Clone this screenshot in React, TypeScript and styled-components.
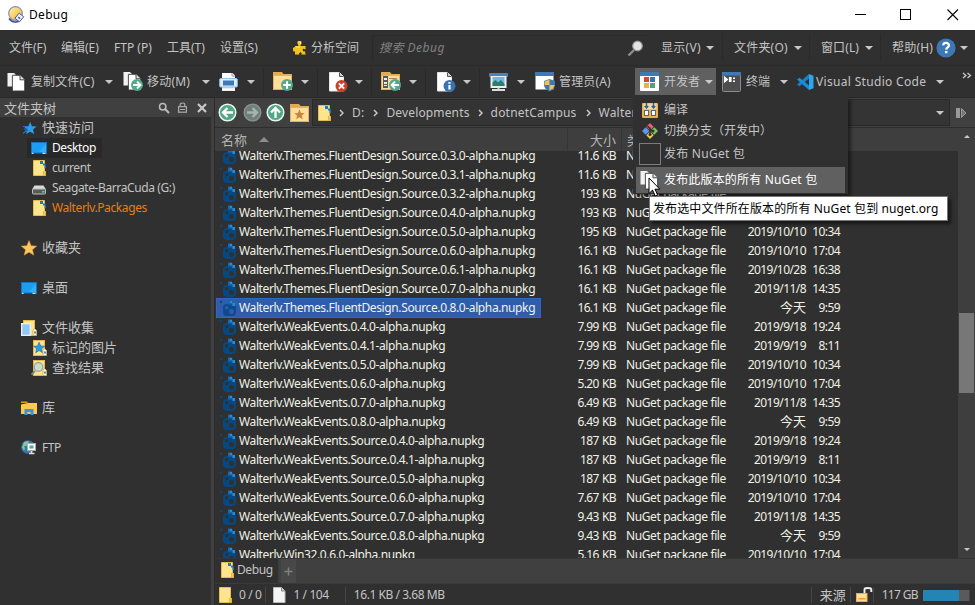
import React from 'react';
import styled, { createGlobalStyle, css } from 'styled-components';

const Global = createGlobalStyle`
  * { box-sizing: border-box; }
  body { margin: 0; background: #303030; overflow: hidden; }
`;

const Window = styled.div`
  position: relative;
  width: 975px;
  height: 605px;
  display: flex;
  flex-direction: column;
  overflow: hidden;
  background: #303030;
  color: #c4c4c4;
  font: 12px/20px 'Noto Sans', 'Noto Sans CJK SC', sans-serif;
  white-space: pre;
  cursor: default;
`;

const Label = styled.span<{ $ls?: number; $size?: number; $color?: string }>`
  flex: none;
  letter-spacing: ${p => p.$ls ?? 0}px;
  font-size: ${p => p.$size ?? 12}px;
  ${p => p.$color && css`color: ${p.$color};`}
`;

const Gap = styled.span<{ $w: number }>`
  flex: none;
  width: ${p => p.$w}px;
`;

const Arrow = styled.span`
  flex: none;
  width: 0;
  height: 0;
  border: 4px solid transparent;
  border-top-color: #c8c8c8;
  border-bottom-width: 0;
`;

const Grow = styled.span`
  flex: 1;
`;

const Divider = styled.span<{ $h?: number; $color?: string }>`
  flex: none;
  width: 1px;
  height: ${p => p.$h ?? 27}px;
  background: ${p => p.$color ?? '#2a2a2a'};
`;

/* ---------- title bar ---------- */
const TitleBar = styled.header`
  flex: none;
  height: 30px;
  display: flex;
  align-items: center;
  padding-left: 7px;
  background: #fff;
  color: #000;
`;

/* ---------- menu bar ---------- */
const MenuBar = styled.nav`
  flex: none;
  height: 36px;
  display: flex;
  align-items: center;
  padding-left: 9px;
  border-bottom: 1px solid #2a2a2a;
`;

const MenuItem = styled.div<{ $w: number }>`
  flex: none;
  width: ${p => p.$w}px;
  display: flex;
  align-items: center;
`;

const SearchBox = styled.div`
  flex: none;
  width: 275px;
  height: 25px;
  margin-right: 14px;
  display: flex;
  align-items: center;
  padding-left: 6px;
  border: solid #292929;
  border-width: 1px 0 0 1px;
  color: #818181;
  font-style: italic;
`;

/* ---------- toolbar ---------- */
const Toolbar = styled.div`
  flex: none;
  height: 32px;
  display: flex;
  align-items: center;
  padding-left: 7px;
  border-bottom: 1px solid #292929;
`;

const ToolButton = styled.button<{ $w: number; $open?: boolean }>`
  flex: none;
  width: ${p => p.$w}px;
  height: 27px;
  display: flex;
  align-items: center;
  padding: 0 0 0 ${p => (p.$open ? 5 : 0)}px;
  border: 0;
  background: ${p => (p.$open ? '#606060' : 'transparent')};
  color: inherit;
  font: inherit;
  text-align: left;
`;

const Tail = styled.span<{ $w: number; $line?: boolean }>`
  flex: none;
  width: ${p => p.$w}px;
  height: 27px;
  padding-left: 8px;
  ${p => p.$line && css`
    &::before { content: ''; display: block; width: 1px; height: 100%; background: #292929; }
  `}
`;

/* ---------- body ---------- */
const Body = styled.main`
  flex: 1;
  min-height: 0;
  display: flex;
`;

const Sidebar = styled.aside`
  flex: none;
  width: 211px;
`;

const PaneHeader = styled.div`
  height: 19px;
  margin-bottom: 1px;
  display: flex;
  align-items: center;
  padding-left: 4px;
  background: #404040;
`;

const Splitter = styled.div`
  flex: none;
  width: 4px;
  background: #404040;
  border-right: 1px solid #2c2c2c;
`;

const TreeRow = styled.div<{ $child?: boolean }>`
  height: 20px;
  display: flex;
  align-items: center;
  padding-left: ${p => (p.$child ? 27 : 21)}px;
`;

const TreeNode = styled.div<{ $child?: boolean; $selected?: boolean }>`
  height: 20px;
  display: flex;
  align-items: center;
  gap: 5px;
  padding: 0 6px 0 ${p => (p.$child ? 4 : 0)}px;
  background: ${p => (p.$selected ? '#282828' : 'transparent')};
  color: ${p => (p.$selected ? '#fff' : 'inherit')};
`;

const TreeLabel = styled.span<{ $cjk: boolean; $color?: string }>`
  font-size: ${p => (p.$cjk ? 13 : 12)}px;
  letter-spacing: ${p => (p.$cjk ? 0 : -0.39)}px;
  padding-bottom: ${p => (p.$cjk ? 2 : 0)}px;
  ${p => p.$color && css`color: ${p.$color};`}
`;

const Lister = styled.section`
  flex: 1;
  min-width: 0;
  display: flex;
  flex-direction: column;
`;

const AddressBar = styled.div`
  flex: none;
  height: 30px;
  display: flex;
  align-items: center;
  padding: 1px 0 1px 3px;
  background: #404040;
  border-bottom: 1px solid #2e2e2e;
`;

const PathBox = styled.div`
  flex: none;
  width: 638px;
  height: 27px;
  margin-left: 3px;
  display: flex;
  align-items: center;
  padding-left: 3px;
  background: #343434;
  border: 1px solid #2a2a2a;
`;

const Columns = styled.div`
  flex: none;
  height: 23px;
  display: flex;
  align-items: center;
  background: #3e3e3e;
  color: #b4b4b4;
`;

const SortMark = styled.span`
  width: 0;
  height: 0;
  margin-left: 12px;
  border: 5px solid transparent;
  border-top-width: 0;
  border-bottom-color: #8c8c8c;
`;

const ListArea = styled.div`
  flex: 1;
  min-height: 0;
  display: flex;
`;

const FileList = styled.div`
  flex: 1;
  overflow: hidden;
`;

const FileRows = styled.div`
  margin-top: -5px;
  color: #f0f2e6;
`;

const FileRow = styled.div`
  height: 19px;
  display: flex;
  align-items: center;
`;

const FileName = styled.div<{ $selected?: boolean }>`
  height: 20px;
  display: flex;
  align-items: center;
  gap: 2px;
  padding: 0 5px 0 3px;
  margin-left: 1px;
  border: 1px solid ${p => (p.$selected ? '#2f68c4' : 'transparent')};
  background: ${p => (p.$selected ? '#2f5cab' : 'transparent')};
`;

const NameCell = styled.div`
  flex: none;
  width: 341px;
  display: flex;
`;

const Cell = styled.div<{ $w: number; $right?: boolean; $ls: number; $ws?: number }>`
  flex: none;
  width: ${p => p.$w}px;
  letter-spacing: ${p => p.$ls}px;
  word-spacing: ${p => p.$ws ?? 0}px;
  text-align: ${p => (p.$right ? 'right' : 'left')};
`;

const Scrollbar = styled.div`
  flex: none;
  width: 17px;
  margin-top: -23px;
  display: flex;
  flex-direction: column;
  align-items: center;
  background: #3e3e3e;
  padding: 7px 0;
`;

const Thumb = styled.div`
  width: 15px;
  height: 80px;
  margin: 175px 0 auto;
  background: #777;
`;

const ScrollArrow = styled.span<{ $up?: boolean }>`
  width: 0;
  height: 0;
  border: 3px solid transparent;
  ${p => (p.$up
    ? css`border-top-width: 0; border-bottom-color: #c8c8c8;`
    : css`border-bottom-width: 0; border-top-color: #c8c8c8;`)}
`;

const Tabs = styled.div`
  flex: none;
  height: 26px;
  display: flex;
  background: #404040;
  border-top: 1px solid #353535;
  border-bottom: 1px solid #3a3a3a;
`;

const Tab = styled.div`
  width: 64px;
  display: flex;
  align-items: center;
  gap: 2px;
  padding: 0 0 2px 4px;
  background: #303030;
  border-right: 1px solid #3d3d3d;
`;

const AddTab = styled.div`
  width: 15px;
  margin-left: 2px;
  display: flex;
  align-items: center;
  justify-content: center;
  background: #484848;
`;

const StatusBar = styled.footer`
  flex: none;
  height: 21px;
  display: flex;
  align-items: center;
  padding: 1px 0 0 2px;
`;

const DiskBar = styled.div`
  width: 47px;
  height: 11px;
  margin: 0 5px 0 5px;
  background: #5a5a5a;
  border-right: 1px solid #444;
  &::before { content: ''; display: block; width: 36px; height: 11px; background: #2484b4; }
`;

/* ---------- floating layers ---------- */
const Popup = styled.div`
  position: absolute;
  left: 633px;
  top: 97px;
  width: 215px;
  height: 97px;
  padding: 2px 3px 0;
  background: #303030;
  box-shadow: 3px 3px 3px rgba(0, 0, 0, 0.45);
`;

const PopupItem = styled.div<{ $h: number; $active?: boolean; $up?: boolean }>`
  height: ${p => p.$h}px;
  display: flex;
  align-items: center;
  padding: 0 0 ${p => (p.$up ? 2 : 0)}px 3px;
  background: ${p => (p.$active ? '#606060' : 'transparent')};
  color: ${p => (p.$active ? '#fff' : '#c4c4c4')};
`;

const PopupIcon = styled.span`
  flex: none;
  width: 25px;
  display: flex;
  align-items: center;
`;

const EmptyIcon = styled.span`
  width: 22px;
  height: 22px;
  border: 1px solid #7c7c7c;
`;

const Tooltip = styled.div`
  position: absolute;
  left: 649px;
  top: 196px;
  width: 299px;
  height: 25px;
  padding-left: 3px;
  line-height: 24px;
  background: #fff;
  border: 1px solid #767676;
  color: #000;
  box-shadow: 3px 3px 3px rgba(0, 0, 0, 0.5);
`;

const Pointer = styled.svg`
  position: absolute;
  left: 648px;
  top: 177px;
`;

/* ---------- icons ---------- */
type IconProps = { w?: number; h?: number; vb?: string; children: React.ReactNode };
const IconSvg = styled.svg`
  flex: none;
  display: block;
`;
const Icon = ({ w = 20, h = 20, vb, children }: IconProps) => (
  <IconSvg width={w} height={h} viewBox={vb ?? `0 0 ${w} ${h}`}>{children}</IconSvg>
);

const AppIcon = () => (
  <Icon w={18} h={18}>
    <defs><linearGradient id="gold" x1="0" y1="0" x2="1" y2="1"><stop offset="0" stopColor="#fff3b0" /><stop offset="1" stopColor="#f0b224" /></linearGradient></defs>
    <circle cx="8.5" cy="7.5" r="6.8" fill="url(#gold)" stroke="#8b8fb8" strokeWidth="1.2" />
    <path d="M2 12.5C5 17 11 17 13 14" stroke="#4854a0" strokeWidth="1.6" fill="none" />
    <path d="M12.2 7.2l4.5 3.6-4.2 5-4.6-3.6z" fill="#eef1fb" stroke="#4a5698" />
    <path d="M11.7 10.5l2 1.6-1 1.2-2-1.6z" fill="#5966a5" />
  </Icon>
);
const Puzzle = () => (
  <Icon w={14} h={16}>
    <path d="M4.500 4V1.500L5.500 1h2l1 .5V4l-1 1V6H12.500v3.300h-1.300L10.500 8.500 9.500 10l1 1.500h1.800V15H8.500l.3-1.600L7.500 12 6 13.400l.2 1.600H2v-4L1 12 0 10.500 0 8l2-1.300V6h3.300V5z" fill="#f2c31d" />
    <path d="M5.500 2h2v2M3 7h4" stroke="#ffe98a" fill="none" /><path d="M2 14.500h4M9 14.500h3.500" stroke="#a87a08" />
  </Icon>
);
const SearchGlass = () => (
  <Icon w={17} h={17}><path d="M7 10L1.500 15.500" stroke="#8d8d8d" strokeWidth="2.400" /><circle cx="10.500" cy="6" r="4.800" fill="#e4e4e4" stroke="#969696" strokeWidth="1.200" /></Icon>
);
const Help = () => (
  <Icon w={20} h={20}>
    <circle cx="10" cy="10" r="9.600" fill="#3b78b5" />
    <path d="M7.200 7.400c.2-3.400 6-3.200 5.700.2-.2 2-2.500 1.800-2.700 4" stroke="#fff" strokeWidth="2.200" fill="none" /><rect x="9" y="13" width="2.400" height="2.200" fill="#fff" />
  </Icon>
);
const Copies = () => (
  <Icon w={19} h={20}>
    <path d="M.5 1h6.500l1.500 1.500V14.500H.5z" fill="#f2f2f2" />
    <path d="M5.400 3.300h8l4.300 4.300V19H5.400z" fill="#fff" stroke="#3a3a3a" strokeWidth=".9" />
    <path d="M13 3.300v4.500h4.700" fill="#e4e4e4" stroke="#333" strokeWidth=".9" />
  </Icon>
);
const Badge = ({ color, children }: { color: string; children: React.ReactNode }) => (
  <g><circle cx="14" cy="14" r="6" fill={color} />{children}</g>
);
const Move = () => (
  <Icon w={21} h={21}>
    <path d="M.5 1h6.500l1.500 1.500V14.500H.5z" fill="#f2f2f2" /><path d="M5.400 3.300h8l4.300 4.300V19H5.400z" fill="#fff" stroke="#3a3a3a" strokeWidth=".9" /><path d="M13 3.300v4.500h4.700" fill="#e4e4e4" stroke="#333" strokeWidth=".9" />
    <Badge color="#55a889"><path d="M10 14h7M14 10.600l3.500 3.400-3.500 3.400" stroke="#fff" strokeWidth="2" fill="none" /></Badge>
  </Icon>
);
const Printer = () => (
  <Icon w={19} h={20}>
    <path d="M3 1h10.500L16 3.500V8H3z" fill="#fff" /><path d="M13 1v3h3" fill="none" stroke="#999" />
    <rect x="3" y="14" width="13" height="5" fill="#d8d8d8" /><path d="M3 17.500h13" stroke="#fff" strokeWidth="2" />
    <rect x=".7" y="6.500" width="17.600" height="8.500" rx="1" fill="#dcecfa" stroke="#8fc0ec" />
    <rect x="4" y="8.500" width="11" height="5" fill="#3e79b7" />
  </Icon>
);
const FolderShape = () => (
  <g><path d="M0 4V1h9l1.500 2H19v15H0z" fill="#e4aa55" /><path d="M0 5h19v14H0z" fill="#ffdf9a" /><path d="M.5 4.500h18v14H.5z" fill="none" stroke="#e6b261" /></g>
);
const NewFolder = () => (
  <Icon w={21} h={21}><FolderShape /><Badge color="#55a889"><path d="M14 10.200v7.600M10.200 14h7.600" stroke="#fff" strokeWidth="2" /></Badge></Icon>
);
const PageShape = () => (
  <g><path d="M.5.5h10l4 4v14.500H.5z" fill="#fff" stroke="#e6e6e6" /><path d="M10.500.5v4h4" fill="#ccc" stroke="#555" /></g>
);
const DeleteFile = () => (
  <Icon w={20} h={20}><PageShape /><g transform="translate(-1.500 0)"><Badge color="#c9412d"><path d="M11.400 11.400l5.200 5.200M16.600 11.400l-5.200 5.200" stroke="#fff" strokeWidth="2" /></Badge></g></Icon>
);
const GoFolder = () => (
  <Icon w={21} h={21}><FolderShape /><rect x="2" y="5" width="5" height="12" fill="#595959" /><path d="M3 7h3v2H3zM3 11h3v2H3zM3 14h3v1H3z" fill="#eee" /><path d="M8 7.500h8" stroke="#a58a60" />
    <Badge color="#55a889"><path d="M18 14h-7M14 10.600L10.600 14l3.400 3.400" stroke="#fff" strokeWidth="2" fill="none" /></Badge></Icon>
);
const FileInfo = () => (
  <Icon w={20} h={20}><PageShape /><g transform="translate(-1.500 0)"><Badge color="#3974b0"><path d="M14 13v4.500M14 10v1.800" stroke="#fff" strokeWidth="2.200" /></Badge></g></Icon>
);
const Slides = () => (
  <Icon w={20} h={20}><rect x="0" y="1" width="19" height="4" rx="1" fill="#4a82bd" /><rect x="1.500" y="4" width="16" height="12" fill="#eee" /><rect x="3.500" y="5" width="12" height="9" fill="#6eb9ea" /><path d="M3.500 14V10.500L6.500 8l2.500 2.500L12 8l3.500 4V14z" fill="#2e7d66" /><rect x="8.500" y="15.500" width="2" height="2" fill="#ccc" /><rect x="3" y="17" width="13" height="2" fill="#ddd" /></Icon>
);
const Admin = () => (
  <Icon w={21} h={21}><path d="M.5 1h18v17.500H.5z" fill="#fff" /><path d="M0 1h19v4H0z" fill="#3f7ab8" />
    <path d="M14.500 8l5.500 2v4c0 3-2.500 5-5.500 6.500C11.500 19 9 17 9 14v-4z" fill="#3a78b8" /><path d="M14.500 8.500v5.500H9.500v-3.500zM14.500 14h5c-.3 2.800-2.500 4.500-5 5.500z" fill="#f6bd54" /></Icon>
);
const DevWindow = () => (
  <Icon w={19} h={19}><rect width="19" height="19" rx="1" fill="#fff" /><path d="M0 0h19v4H0z" fill="#3f7ab8" /><rect x="4" y="5" width="5" height="5" fill="#cc4d33" /><rect x="10" y="5" width="5" height="5" fill="#3974b0" /><rect x="4" y="11" width="5" height="5" fill="#e8b04e" /><rect x="10" y="11" width="5" height="5" fill="#52a37c" /></Icon>
);
const Terminal = () => (
  <Icon w={19} h={20}><rect x=".5" y=".5" width="18" height="19" rx="1" fill="#4d4d4d" stroke="#8b8b8b" /><path d="M0 0h19v3.500H0z" fill="#3f7ab8" /><path d="M2.500 5v5l3-2.500zM9.500 5.700H7.500v3.600h2" stroke="#fff" fill="#fff" strokeWidth="1.200" /><path d="M11 5.500h2v1.500h-2zM11 8.500h2V10h-2z" fill="#fff" /></Icon>
);
const VsCode = () => (
  <Icon w={17} h={16}><path d="M12 0l4.500 1.800v12.400L12 16z" fill="#2ea6ee" /><path d="M12 0v4.500L2.500 12.300 0 10.600z" fill="#1b80c4" /><path d="M12 16v-4.500L2.500 3.700 0 5.400z" fill="#168fd8" /></Icon>
);
const MiniSearch = () => (
  <Icon w={12} h={12}><circle cx="4.700" cy="4.700" r="3.200" fill="none" stroke="#bbb" strokeWidth="1.500" /><path d="M7 7l4 4" stroke="#bbb" strokeWidth="2.200" /></Icon>
);
const Padlock = () => (
  <Icon w={9} h={11}><rect x=".6" y="4.600" width="7.800" height="5.600" fill="none" stroke="#aaa" strokeWidth="1.200" /><path d="M2.200 4.500V2.500C2.200.5 6.800.5 6.800 2.500v2M2 7.500h5" fill="none" stroke="#aaa" strokeWidth="1.200" /></Icon>
);
const Cross = () => (
  <Icon w={10} h={10}><path d="M1 1l8 8M9 1L1 9" stroke="#c8c8c8" strokeWidth="2.200" /></Icon>
);
const StarShape = 'M8 .5l2.200 5.200 5.600.4-4.300 3.600 1.400 5.500L8 12.200l-4.900 3 1.400-5.500L.2 6.100l5.600-.4z';
const QuickStar = () => (
  <Icon w={16} h={16}><path transform="translate(2.500 1.500) scale(.83)" d={StarShape} fill="#2b9cf0" /><path d="M2 6.500h5M3 9h4M2 13.500l4-3.500M4 12l3-2" stroke="#1c75c0" strokeWidth="1.200" /></Icon>
);
const GoldStar = () => (
  <Icon w={16} h={16}><path d={StarShape} fill="#ffc65c" stroke="#d88a34" strokeWidth=".5" /></Icon>
);
const Monitor = () => (
  <Icon w={16} h={16}><rect x=".5" y="2.500" width="15" height="11" fill="#1a9df5" stroke="#1673b8" /><path d="M8 12l7-8v8z" fill="#35aefc" /><path d="M1 13.300h14" stroke="#0e4d80" /><path d="M1 13.300h1.500M11.500 13.300h3" stroke="#fff" /></Icon>
);
const FolderPin = ({ pin = true }: { pin?: boolean }) => (
  <Icon w={16} h={16}><path d="M2.500 .5h11v11h1v4h-12z" fill="#ffe48e" stroke="#eac254" strokeWidth=".9" /><path d="M12.500 11v4.500h2v-4.500" fill="#f6ca52" stroke="#dfac38" strokeWidth=".7" />
    {pin && <path d="M9 1h3v3H9zM12 3.500h2.500v2H12zM13.500 5.500H15V8h-1.500z" fill="#2277c0" />}</Icon>
);
const Drive = () => (
  <Icon w={16} h={16}><path d="M3.500 5.500h9l2.500 4H1z" fill="#d9d9d9" /><rect x="1.500" y="9" width="13" height="5" rx="1" fill="#5a5a5a" stroke="#bdbdbd" /><rect x="11" y="11" width="2.500" height="1.500" fill="#2ee562" /></Icon>
);
const CollectBase = ({ children }: { children: React.ReactNode }) => (
  <Icon w={16} h={16}><rect x="2.500" y=".5" width="11" height="15" fill="#ffe48e" stroke="#e6b84a" />{children}<path d="M12 15.500v-5l1.500-2 2 2v5z" fill="#fff" stroke="#e0a93a" /><rect x="13" y="11.500" width="2" height="2" fill="#3f8fd8" /></Icon>
);
const Collection = () => <CollectBase><rect x=".7" y="3.700" width="8.600" height="11.600" fill="#8fc8f5" stroke="#e8eef5" strokeWidth="1.400" /></CollectBase>;
const Marked = () => <CollectBase><path transform="translate(2.500 2) scale(.7)" d={StarShape} fill="#2e9be8" stroke="#1d6fb2" /></CollectBase>;
const Found = () => <CollectBase><path d="M4 11l-3.500 3.500" stroke="#7a8a94" strokeWidth="1.800" /><circle cx="7.500" cy="7" r="4.300" fill="#cfdccb" stroke="#8fa3a8" strokeWidth="1.200" /></CollectBase>;
const Library = () => (
  <Icon w={16} h={16}><path d="M0 4V1.500h6l1 1.500H0z" fill="#e29a12" /><path d="M0 4.500l7-1.500h9v11H0z" fill="#fcc94a" /><path d="M3.500 15V9h9v6h-3v-3h-3v3z" fill="#3794de" /></Icon>
);
const Globe = () => (
  <Icon w={16} h={16}><circle cx="7" cy="7" r="6.800" fill="#3677ad" /><path d="M3 2l4-1 1 2-3 3-2 .5 1 2-1 2-2-3z" fill="#85c59a" /><rect x="6.500" y="3.500" width="8" height="7" fill="#fff" stroke="#aaa" /><rect x="8.500" y="5.500" width="4" height="3" fill="#55a889" /><path d="M10.500 11v2M8 13.500h5.500" stroke="#ddd" strokeWidth="1.500" /></Icon>
);
const Nav = ({ d, dim }: { d: string; dim?: boolean }) => (
  <Icon w={19} h={19}><circle cx="9.500" cy="9.500" r="8.300" fill={dim ? '#6b8177' : '#52a884'} stroke={dim ? '#8a8f8c' : '#e8f4ee'} strokeWidth="1.500" /><path d={d} stroke={dim ? '#aab3ae' : '#fff'} strokeWidth="2.300" fill="none" /></Icon>
);
const Favorite = () => (
  <Icon w={19} h={19}><FolderShape /><path transform="translate(4 6) scale(.68)" d={StarShape} fill="#c6843c" /></Icon>
);
const Chevron = () => (
  <Icon w={5} h={8}><path d="M1 1l3 3-3 3" stroke="#c8c8c8" strokeWidth="1.500" fill="none" /></Icon>
);
const Nupkg = ({ dim }: { dim?: boolean }) => {
  const hole = dim ? '#2f5cab' : '#303030';
  const body = dim ? '#0e4a8e' : '#044983';
  return (
    <Icon w={17} h={17}><rect x="3" y="5" width="13" height="12" rx="4" fill={body} /><circle cx="6.700" cy="8.700" r="1.700" fill={hole} /><circle cx="11.500" cy="12.500" r="2.500" fill={hole} /><path d="M8 1.500h4l1 4H8z" fill="#1769af" /><path d="M10 2h2v2h-2zM12.500 4h2.500v3h-2.500z" fill="#2c8bd6" /><rect x="0" y="2" width="2" height="2" fill="#044983" /></Icon>
  );
};
const Build = () => (
  <Icon w={16} h={16}><rect y="1" width="16" height="15" rx="1" fill="#eeb14a" /><rect x="1.500" y="1.500" width="13" height="6" fill="#f6d596" /><path d="M4.500 1v5M2.800 4l1.700 2L6.200 4M11.500 1v5M9.800 4l1.700 2 1.700-2" stroke="#1f62ad" strokeWidth="1.400" fill="none" /><rect x="2.500" y="8.500" width="4" height="5" fill="#fff" stroke="#56677a" /><rect x="9.500" y="8.500" width="4" height="5" fill="#fff" stroke="#56677a" /></Icon>
);
const Branch = () => (
  <Icon w={16} h={16}><path d="M8 0l3.700 3.700L8 7.400 4.300 3.700z" fill="#e8636c" /><path d="M12.300 4.300L16 8l-3.700 3.700L8.600 8z" fill="#7cc75b" /><path d="M3.700 4.300L7.400 8l-3.700 3.700L0 8z" fill="#5b97ec" /><path d="M8 8.600l3.700 3.700L8 16l-3.700-3.700z" fill="#e9c750" /><path d="M5.500 3l5 5.500M8 4.500V12" stroke="#333" strokeWidth="1.500" /><circle cx="8" cy="11.500" r="1.500" fill="#333" /><circle cx="11" cy="8" r="1.500" fill="#333" /></Icon>
);
const Unlock = () => (
  <Icon w={17} h={16}><rect x=".5" y="6.500" width="10.500" height="8" fill="#ffdf9a" stroke="#e5b057" /><rect x="2.500" y="11" width="7" height="1.500" fill="#dba14a" /><path d="M8.500 6V2.500C8.500 1 10 1 12 1s3.300 0 3.300 1.500V5" stroke="#f0f0f0" strokeWidth="1.900" fill="none" /></Icon>
);

/* ---------- data ---------- */
const fluent = 'Walterlv.Themes.FluentDesign.Source.';
const weak = 'Walterlv.WeakEvents.';
const files: [string, string, string, string][] = [
  [fluent + '0.3.0', '11.6 KB', '', ''],
  [fluent + '0.3.1', '11.6 KB', '', ''],
  [fluent + '0.3.2', '193 KB', '', ''],
  [fluent + '0.4.0', '193 KB', '', ''],
  [fluent + '0.5.0', '195 KB', '2019/10/10', '10:34'],
  [fluent + '0.6.0', '16.1 KB', '2019/10/10', '17:04'],
  [fluent + '0.6.1', '16.1 KB', '2019/10/28', '16:38'],
  [fluent + '0.7.0', '16.1 KB', '2019/11/8', '14:35'],
  [fluent + '0.8.0', '16.1 KB', '今天', '9:59'],
  [weak + '0.4.0', '7.99 KB', '2019/9/18', '19:24'],
  [weak + '0.4.1', '7.99 KB', '2019/9/19', '8:11'],
  [weak + '0.5.0', '7.99 KB', '2019/10/10', '10:34'],
  [weak + '0.6.0', '5.20 KB', '2019/10/10', '17:04'],
  [weak + '0.7.0', '6.49 KB', '2019/11/8', '14:35'],
  [weak + '0.8.0', '6.49 KB', '今天', '9:59'],
  [weak + 'Source.0.4.0', '187 KB', '2019/9/18', '19:24'],
  [weak + 'Source.0.4.1', '187 KB', '2019/9/19', '8:11'],
  [weak + 'Source.0.5.0', '187 KB', '2019/10/10', '10:34'],
  [weak + 'Source.0.6.0', '7.67 KB', '2019/10/10', '17:04'],
  [weak + 'Source.0.7.0', '9.43 KB', '2019/11/8', '14:35'],
  [weak + 'Source.0.8.0', '9.43 KB', '今天', '9:59'],
  ['Walterlv.Win32.0.6.0', '5.16 KB', '2019/10/10', '17:04'],
];
const SELECTED = 8;

type Node = { text: string; icon: React.ReactNode; child?: boolean; selected?: boolean; color?: string } | null;
const tree: Node[] = [
  { text: '快速访问', icon: <QuickStar /> },
  { text: 'Desktop', icon: <Monitor />, child: true, selected: true },
  { text: 'current', icon: <FolderPin />, child: true },
  { text: 'Seagate-BarraCuda (G:)', icon: <Drive />, child: true },
  { text: 'Walterlv.Packages', icon: <FolderPin />, child: true, color: '#e87e10' },
  null,
  { text: '收藏夹', icon: <GoldStar /> },
  null,
  { text: '桌面', icon: <Monitor /> },
  null,
  { text: '文件收集', icon: <Collection /> },
  { text: '标记的图片', icon: <Marked />, child: true },
  { text: '查找结果', icon: <Found />, child: true },
  null,
  { text: '库', icon: <Library /> },
  null,
  { text: 'FTP', icon: <Globe /> },
];
const isCjk = (s: string) => s.charCodeAt(0) > 0x2e80;

const tools = [
  { w: 116, icon: <Copies />, text: '复制文件(C)', ls: 0.1, gap: 5, tail: 10 },
  { w: 96, icon: <Move />, text: '移动(M)', ls: 0.2, gap: 3, tail: 9 },
  { w: 54, icon: <Printer />, tail: 18, line: true },
  { w: 56, icon: <NewFolder />, tail: 20, line: true },
  { w: 52, icon: <DeleteFile />, tail: 18, line: true },
  { w: 56, icon: <GoFolder />, tail: 20, line: true },
  { w: 52, icon: <FileInfo />, tail: 18, line: true },
  { w: 46, icon: <Slides />, tail: 10 },
];

export default function App() {
  return (
    <Window>
      <Global />
      <TitleBar>
        <AppIcon /><Gap $w={4} /><Label $ls={0.3}>Debug</Label><Grow />
        <Icon w={12} h={12}><path d="M0 5.500h11" stroke="#000" /></Icon><Gap $w={33} />
        <Icon w={12} h={12}><rect x=".5" y=".5" width="10" height="10" fill="none" stroke="#000" /></Icon><Gap $w={35} />
        <Icon w={12} h={12}><path d="M.5 .5l10.500 10.500M11 .5L.5 11" stroke="#000" strokeWidth="1.100" /></Icon><Gap $w={16} />
      </TitleBar>

      <MenuBar>
        <MenuItem $w={52}><Label>文件(F)</Label></MenuItem>
        <MenuItem $w={53}><Label>编辑(E)</Label></MenuItem>
        <MenuItem $w={53}><Label>FTP (P)</Label></MenuItem>
        <MenuItem $w={53}><Label>工具(T)</Label></MenuItem>
        <MenuItem $w={73}><Label>设置(S)</Label></MenuItem>
        <MenuItem $w={79}><Puzzle /><Gap $w={4} /><Label>分析空间</Label></MenuItem>
        <SearchBox><Label $ls={0.5}>搜索 Debug</Label><Grow /><SearchGlass /><Gap $w={3} /></SearchBox>
        <MenuItem $w={61}><Label $ls={0.3}>显示(V)</Label><Grow /><Arrow /><Gap $w={8} /></MenuItem>
        <Divider /><Gap $w={11} />
        <MenuItem $w={75}><Label $ls={0.2}>文件夹(O)</Label><Grow /><Arrow /><Gap $w={7} /></MenuItem>
        <Divider /><Gap $w={11} />
        <MenuItem $w={59}><Label $ls={0.1}>窗口(L)</Label><Grow /><Arrow /><Gap $w={7} /></MenuItem>
        <Divider /><Gap $w={11} />
        <MenuItem $w={76}><Label $ls={0.2}>帮助(H)</Label><Grow /><Help /><Gap $w={4} /><Arrow /></MenuItem>
      </MenuBar>

      <Toolbar>
        {tools.map((t, i) => (
          <ToolButton key={i} $w={t.w}>
            {t.icon}
            {t.text && <><Gap $w={t.gap!} /><Label $ls={t.ls}>{t.text}</Label></>}
            <Grow /><Arrow /><Tail $w={t.tail} $line={t.line} />
          </ToolButton>
        ))}
        <ToolButton $w={100}><Admin /><Gap $w={3} /><Label $ls={0.15}>管理员(A)</Label></ToolButton>
        <ToolButton $w={81} $open><DevWindow /><Gap $w={5} /><Label>开发者</Label><Grow /><Arrow /><Gap $w={3} /></ToolButton>
        <Gap $w={6} />
        <ToolButton $w={75}><Terminal /><Gap $w={5} /><Label>终端</Label><Grow /><Arrow /><Gap $w={9} /></ToolButton>
        <ToolButton $w={165}><VsCode /><Gap $w={2} /><Label $ls={0.32}>Visual Studio Code</Label><Grow /><Arrow /><Gap $w={18} /></ToolButton>
        <Icon w={10} h={20}><path d="M1 1l3 2.500-3 2.500M5.500 1l3 2.500-3 2.500" fill="none" stroke="#c8c8c8" strokeWidth="1.300" /></Icon>
      </Toolbar>

      <Body>
        <Sidebar>
          <PaneHeader>
            <Label $size={13}>文件夹树</Label><Grow />
            <MiniSearch /><Gap $w={8} /><Padlock /><Gap $w={10} /><Cross /><Gap $w={4} />
          </PaneHeader>
          {tree.map((n, i) => (
            <TreeRow key={i} $child={n?.child}>
              {n && (
                <TreeNode $child={n.child} $selected={n.selected}>
                  {n.icon}
                  <TreeLabel $cjk={isCjk(n.text)} $color={n.color}>{n.text}</TreeLabel>
                </TreeNode>
              )}
            </TreeRow>
          ))}
        </Sidebar>
        <Splitter />
        <Lister>
          <AddressBar>
            <Nav d="M15 9.500H5.500M9.500 5L5 9.500 9.500 14" /><Gap $w={6} />
            <Nav dim d="M4 9.500h9.500M9.500 5l4.500 4.500L9.500 14" /><Gap $w={4} />
            <Nav d="M9.500 15V5.500M5 9.500L9.500 5 14 9.500" /><Gap $w={5} />
            <Favorite />
            <PathBox>
              <FolderPin /><Gap $w={7} />
              <Chevron /><Gap $w={8} /><Label $ls={0.2}>D:</Label><Gap $w={9} />
              <Chevron /><Gap $w={8} /><Label $ls={0.15}>Developments</Label><Gap $w={8} />
              <Chevron /><Gap $w={8} /><Label $ls={0.2}>dotnetCampus</Label><Gap $w={9} />
              <Chevron /><Gap $w={8} /><Label $ls={0.2}>Walterlv</Label>
              <Grow /><Arrow /><Gap $w={5} />
            </PathBox>
            <Gap $w={6} />
            <Icon w={12} h={10}><path d="M0 0h4v10H0z" fill="#999" /><path d="M5.500 .5v9L10 5z" fill="#777" stroke="#999" /></Icon>
          </AddressBar>
          <Columns>
            <Gap $w={6} /><Label $size={13}>名称</Label><SortMark /><Gap $w={298} />
            <Divider $h={23} $color="#353535" /><Gap $w={22} /><Label $size={13}>大小</Label><Gap $w={5} />
            <Divider $h={23} $color="#353535" /><Gap $w={5} /><Label $size={13}>类型</Label>
          </Columns>
          <ListArea>
            <FileList>
              <FileRows>
                {files.map(([name, size, date, time], i) => (
                  <FileRow key={i}>
                    <NameCell>
                      <FileName $selected={i === SELECTED}>
                        <Nupkg dim={i === SELECTED} />
                        <Label $ls={-0.385}>{name}-alpha.nupkg</Label>
                      </FileName>
                    </NameCell>
                    <Cell $w={60} $right $ls={-0.66} $ws={1}>{size}</Cell>
                    <Gap $w={10} />
                    <Cell $w={110} $ls={-0.385}>NuGet package file</Cell>
                    <Cell $w={70} $right $ls={-0.55}>{isCjk(date) ? <Label $size={13}>{date}</Label> : date}</Cell>
                    <Cell $w={34} $right $ls={-0.6}>{time}</Cell>
                  </FileRow>
                ))}
              </FileRows>
            </FileList>
            <Scrollbar><ScrollArrow $up /><Thumb /><ScrollArrow /></Scrollbar>
          </ListArea>
          <Tabs>
            <Tab><FolderPin /><Label $ls={-0.4}>Debug</Label></Tab>
            <AddTab><Icon w={9} h={9}><path d="M4.500 .5v8M.5 4.500h8" stroke="#808080" strokeWidth="1.500" /></Icon></AddTab>
          </Tabs>
          <StatusBar>
            <FolderPin pin={false} /><Gap $w={6} /><Label $ls={-0.4}>0 / 0</Label><Gap $w={4} /><Divider $h={16} $color="#454545" /><Gap $w={7} />
            <Icon w={13} h={16}><path d="M.5.5h8l3.500 3.500v11.500H.5z" fill="#f5f5f5" stroke="#bbb" /><path d="M8.500.5V4H12" fill="#ccc" stroke="#888" /></Icon>
            <Gap $w={7} /><Label $ls={-0.4}>1 / 104</Label><Gap $w={16} /><Divider $h={16} $color="#454545" /><Gap $w={8} />
            <Label $ls={-0.45}>16.1 KB / 3.68 MB</Label>
            <Grow />
            <Divider $h={16} $color="#454545" /><Gap $w={8} /><Label $size={13}>来源</Label><Gap $w={4} /><Divider $h={16} $color="#454545" />
            <Gap $w={5} /><Unlock /><Divider $h={16} $color="#454545" /><Gap $w={8} /><Label $ls={-0.65}>117 GB</Label><DiskBar />
          </StatusBar>
        </Lister>
      </Body>

      <Popup>
        <PopupItem $h={21}><PopupIcon><Gap $w={3} /><Build /></PopupIcon><Label>编译</Label></PopupItem>
        <PopupItem $h={22}><PopupIcon><Gap $w={3} /><Branch /></PopupIcon><Label>切换分支（开发中）</Label></PopupItem>
        <PopupItem $h={25} $up><PopupIcon><EmptyIcon /></PopupIcon><Label $ls={0.25}>发布 NuGet 包</Label></PopupItem>
        <PopupItem $h={26} $active><PopupIcon><Gap $w={1} /><Copies /></PopupIcon><Label $ls={0.17}>发布此版本的所有 NuGet 包</Label></PopupItem>
      </Popup>
      <Tooltip><Label $ls={0.12}>发布选中文件所在版本的所有 NuGet 包到 nuget.org</Label></Tooltip>
      <Pointer width="13" height="20" viewBox="0 0 13 20"><path d="M1 1v15.500l3.600-3.400 2.600 5.900 2.400-1.100-2.600-5.700h4.800z" fill="#fff" stroke="#000" /></Pointer>
    </Window>
  );
}
